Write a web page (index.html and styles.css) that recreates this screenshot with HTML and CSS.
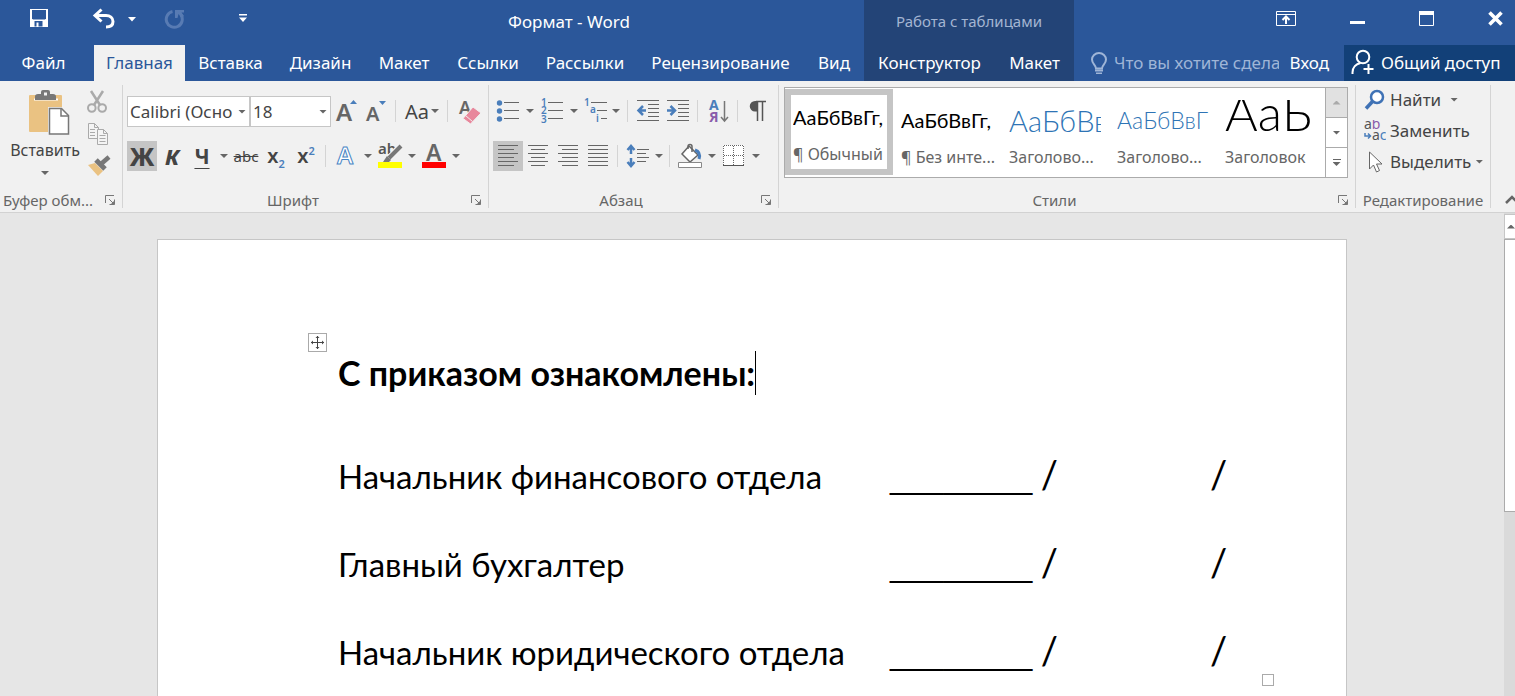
FILE: index.html
```html
<!DOCTYPE html>
<html lang="ru">
<head>
<meta charset="utf-8">
<title>Формат - Word</title>
<link rel="stylesheet" href="styles.css">
</head>
<body>
<header class="top">
  <div class="titlebar">
    <div class="quick">
      <button class="qbtn save" aria-label="Сохранить"><svg width="20" height="20" viewBox="0 0 20 20"><path d="M1 1h18v18H1z" fill="#fff"/><path d="M3 2h14v8.500l-1 1H4l-1-1z" fill="#2b579a"/><path d="M5.500 13h8v5.500h-8z" fill="#2b579a"/><path d="M7.500 14.500h2V19h-2z" fill="#fff"/></svg></button>
      <button class="qbtn undo" aria-label="Отменить"><svg width="24" height="22" viewBox="0 0 24 22"><path d="M9.500 1.500 3 7.500l6.500 6M3.500 7.500H14c4 0 7 2.200 7 6s-2.500 5.500-7 5.500" fill="none" stroke="#fff" stroke-width="3"/></svg></button>
      <button class="qbtn drop" aria-label="Список отмены"><svg width="8" height="5" viewBox="0 0 8 5"><path d="M0 0h8L4 4.500z" fill="#fff"/></svg></button>
      <button class="qbtn redo" aria-label="Повторить"><svg width="22" height="22" viewBox="0 0 22 22"><path d="M8.500 3.500a8 8 0 1 0 8.500 3.500" fill="none" stroke="#587bb3" stroke-width="3"/><path d="M11 2h9v2.500h-2.500L20 8l-2.500 2-3-4-1 4H11z" fill="#587bb3"/></svg></button>
      <button class="qbtn custom" aria-label="Настройка панели"><svg width="8" height="9" viewBox="0 0 8 9"><path d="M0 0h8v1.500H0zM0 3.500h8L4 8z" fill="#fff"/></svg></button>
    </div>
    <h1 class="doc-title">Формат - Word</h1>
    <div class="context-title">Работа с таблицами</div>
    <div class="window">
      <button aria-label="Параметры ленты"><svg width="20" height="15" viewBox="0 0 20 15"><path d="M.5.500h19v14H.500zM.5 3.500h19" fill="none" stroke="#fff"/><path d="M10 13V6M6.500 9 10 5.500 13.500 9" fill="none" stroke="#fff" stroke-width="2"/></svg></button>
      <button aria-label="Свернуть"><svg width="15" height="15" viewBox="0 0 15 15"><path d="M0 10h15v3H0z" fill="#fff"/></svg></button>
      <button aria-label="Развернуть"><svg width="15" height="15" viewBox="0 0 15 15"><path d="M.5.500h14v14H.500z" fill="none" stroke="#fff"/><path d="M0 0h15v4H0z" fill="#fff"/></svg></button>
      <button aria-label="Закрыть"><svg width="15" height="15" viewBox="0 0 15 15"><path d="M1.500 1.500l12 12M13.500 1.500l-12 12" stroke="#fff" stroke-width="3.600"/></svg></button>
    </div>
  </div>
  <div class="tabbar">
    <nav class="tabs">
      <button class="tab file">Файл</button><button class="tab active">Главная</button><button class="tab">Вставка</button><button class="tab">Дизайн</button><button class="tab">Макет</button><button class="tab">Ссылки</button><button class="tab">Рассылки</button><button class="tab">Рецензирование</button><button class="tab">Вид</button>
    </nav>
    <nav class="context-tabs"><button class="tab">Конструктор</button><button class="tab">Макет</button></nav>
    <div class="account">
      <label class="tell"><svg width="18" height="23" viewBox="0 0 18 23"><path d="M6 16.500c0-3.500-4-4.500-4-9a7 6.500 0 0 1 14 0c0 4.500-4 5.500-4 9z" fill="none" stroke="#9fb5d7" stroke-width="2"/><path d="M5 17.500h8v2H5zM6 20.500h6V22H6z" fill="#9fb5d7"/></svg><input type="text" placeholder="Что вы хотите сделать?" aria-label="Что вы хотите сделать?"></label>
      <a class="login" href="#">Вход</a>
      <button class="share"><svg width="24" height="26" viewBox="0 0 24 26"><circle cx="12" cy="8" r="6.300"/><path d="M1.500 25v-1.500c0-5 3.500-8.500 8-9.500M12.500 20h10M17.500 15v10"/></svg>Общий доступ</button>
    </div>
  </div>
</header>

<section class="ribbon" aria-label="Лента">
  <div class="group clipboard">
    <div class="body clip-body">
      <button class="paste">
        <svg width="42" height="46" viewBox="0 0 42 46"><path d="M2 5h31a1 1 0 0 1 1 1v36H2a1 1 0 0 1-1-1V6a1 1 0 0 1 1-1z" fill="#eac282"/><path d="M6 9.500h24" stroke="#fff" stroke-width="2"/><path d="M7 10V6.500Q7 4 10 4h3V2q0-2 2-2h5q2 0 2 2v2h3q3 0 3 2.500V10z" fill="#777"/><path d="M16 2.500h3v3h-3z" fill="#f1f1f1"/><path d="M20 17h15l7 7v22H20z" fill="#f1f1f1"/><path d="M21.500 18.500h12l7 7V44h-19z" fill="#fff" stroke="#777" stroke-width="1.500"/><path d="M33 18.500V26h7.500" fill="none" stroke="#777" stroke-width="1.500"/></svg>
        <span>Вставить</span>
        <i class="tri"></i>
      </button>
      <div class="clip-side">
        <button aria-label="Вырезать"><svg width="20" height="23" viewBox="0 0 20 23"><path d="M4 1l9 14M16 1L7 15" stroke="#aaa" stroke-width="2.500"/><circle cx="4.800" cy="18" r="3.800" fill="none" stroke="#aaa" stroke-width="2"/><circle cx="15.200" cy="18" r="3.800" fill="none" stroke="#aaa" stroke-width="2"/></svg></button>
        <button aria-label="Копировать"><svg width="22" height="22" viewBox="0 0 22 22"><g fill="#f4f4f4" stroke="#aaa"><path d="M1.500.500h6l4 4v11h-10zM7.500.500v4h4M3 6.500h5M3 9.500h5M3 12.500h5"/><path d="M10.500 6.500h6l4 4v11h-10zM16.500 6.500v4h4M12.500 12.500h6M12.500 15.500h6M12.500 18.500h6"/></g></svg></button>
        <button aria-label="Формат по образцу"><svg width="24" height="22" viewBox="0 0 24 22"><path d="M1 10l7-2 8 8-5 5z" fill="#eac282"/><path d="M9 5l9 9" stroke="#777" stroke-width="5"/><path d="M14 9l8-7" stroke="#777" stroke-width="4.500"/></svg></button>
      </div>
    </div>
    <footer><span>Буфер обм...</span><button class="launch" aria-label="Буфер обмена: параметры"><svg><use href="#launch"/></svg></button></footer>
  </div>

  <div class="group font">
    <div class="body rows">
      <div class="row">
        <span class="pick family"><select aria-label="Шрифт"><option>Calibri (Осно</option></select></span>
        <span class="pick size"><select aria-label="Размер шрифта"><option>18</option></select></span>
        <button class="ib" aria-label="Увеличить размер"><svg width="30" height="30"><text x="5" y="25" class="g" font-size="24">A</text><path d="M19 8h7l-3.500-4z" fill="#4a7ebb"/></svg></button>
        <button class="ib" aria-label="Уменьшить размер"><svg width="30" height="30"><text x="5" y="25" class="g" font-size="20">A</text><path d="M18 5h7l-3.500 4z" fill="#4a7ebb"/></svg></button>
        <i class="sep"></i>
        <button class="ib split case"><span>Aa</span><i class="tri"></i></button>
        <i class="sep"></i>
        <button class="ib" aria-label="Очистить формат"><svg width="30" height="30"><text x="6" y="18" class="g" font-size="18">A</text><path d="M10 22.500L20 11l8 6L17.500 28z" fill="#e8879c" stroke="#f1f1f1"/><path d="M12.500 19.500l7 6" stroke="#f1f1f1"/></svg></button>
      </div>
      <div class="row">
        <button class="ib on bold">Ж</button>
        <button class="ib ital">К</button>
        <button class="ib und">Ч</button><button class="arr" aria-label="Подчеркивание"><i class="tri"></i></button>
        <button class="ib strike">abc</button>
        <button class="ib idx"><span>x<sub>2</sub></span></button>
        <button class="ib idx"><span>x<sup>2</sup></span></button>
        <i class="sep"></i>
        <button class="ib" aria-label="Текстовые эффекты"><svg width="30" height="30"><text x="6" y="23" font-size="24" class="fx">A</text></svg></button><button class="arr" aria-label="Эффекты"><i class="tri"></i></button>
        <button class="ib" aria-label="Цвет выделения"><svg width="30" height="30"><text x="3" y="13" class="ab" font-size="15">ab</text><path d="M25 5l-11 12" stroke="#f1f1f1" stroke-width="6"/><path d="M26 5l-12 12" stroke="#777" stroke-width="4"/><path d="M12 15l4 4-2 2H8z" fill="#777"/><path d="M3 21h24v6H3z" fill="#ff0"/></svg></button><button class="arr" aria-label="Цвета выделения"><i class="tri"></i></button>
        <button class="ib" aria-label="Цвет текста"><svg width="30" height="30"><text x="7" y="20" class="g" font-size="23">A</text><path d="M3 21h24v6H3z" fill="#f00"/></svg></button><button class="arr" aria-label="Цвета текста"><i class="tri"></i></button>
      </div>
    </div>
    <footer><span>Шрифт</span><button class="launch" aria-label="Шрифт: параметры"><svg><use href="#launch"/></svg></button></footer>
  </div>

  <div class="group para">
    <div class="body rows">
      <div class="row">
        <button class="ib" aria-label="Маркеры"><svg width="30" height="30"><g fill="#4a7ebb"><circle cx="6.500" cy="7" r="2.700"/><circle cx="6.500" cy="15" r="2.700"/><circle cx="6.500" cy="23" r="2.700"/></g><path d="M11 6.500h15M11 14.500h15M11 22.500h15" class="ln"/></svg></button><button class="arr" aria-label="Виды маркеров"><i class="tri"></i></button>
        <button class="ib" aria-label="Нумерация"><svg width="30" height="30"><g class="num"><text x="4" y="10">1</text><text x="4" y="18">2</text><text x="4" y="27">3</text></g><path d="M11 6.500h15M11 14.500h15M11 22.500h15" class="ln"/></svg></button><button class="arr" aria-label="Виды нумерации"><i class="tri"></i></button>
        <button class="ib narrow" aria-label="Многоуровневый список"><svg width="28" height="30"><g class="num"><text x="3" y="10">1</text><text x="9" y="17">a</text><text x="15" y="26">i</text></g><path d="M10 6.500h16M16 14.500h10M20 22.500h6" class="ln"/></svg></button><button class="arr" aria-label="Виды списков"><i class="tri"></i></button>
        <i class="sep"></i>
        <button class="ib" aria-label="Уменьшить отступ"><svg width="30" height="30"><path d="M4 4.500h22M15 8.500h11M15 12.500h11M15 16.500h11M15 20.500h11M4 24.500h22" class="ln"/><path d="M13 14.500H6M10 10l-4.500 4.500L10 19" class="bl"/></svg></button>
        <button class="ib" aria-label="Увеличить отступ"><svg width="30" height="30"><path d="M4 4.500h22M15 8.500h11M15 12.500h11M15 16.500h11M15 20.500h11M4 24.500h22" class="ln"/><path d="M4 14.500h7M7.500 10l4.500 4.500L7.500 19" class="bl"/></svg></button>
        <i class="sep"></i>
        <button class="ib" aria-label="Сортировка"><svg width="30" height="30"><text x="6" y="14" font-size="14" font-weight="700" fill="#4a7ebb">А</text><text x="6" y="26" font-size="14" font-weight="700" fill="#8a5cab">Я</text><path d="M21.500 5v20M18 21l3.500 4 3.500-4" fill="none" stroke="#777" stroke-width="1.500"/></svg></button>
        <i class="sep"></i>
        <button class="ib" aria-label="Знаки абзаца"><svg width="30" height="30"><path d="M13 5.500h10M14.500 5v20M19.500 5v20" stroke="#555" stroke-width="1.500" fill="none"/><path d="M14 5h-2a5 5 0 0 0 0 10.500h2z" fill="#555"/></svg></button>
      </div>
      <div class="row">
        <button class="ib on" aria-label="По левому краю"><svg width="30" height="30"><path d="M5 4.500h20M5 8.500h16M5 12.500h20M5 16.500h16M5 20.500h20M5 24.500h16" class="ln"/></svg></button>
        <button class="ib" aria-label="По центру"><svg width="30" height="30"><path d="M5 4.500h20M8 8.500h14M5 12.500h20M8 16.500h14M5 20.500h20M8 24.500h14" class="ln"/></svg></button>
        <button class="ib" aria-label="По правому краю"><svg width="30" height="30"><path d="M5 4.500h20M9 8.500h16M5 12.500h20M9 16.500h16M5 20.500h20M9 24.500h16" class="ln"/></svg></button>
        <button class="ib" aria-label="По ширине"><svg width="30" height="30"><path d="M5 4.500h20M5 8.500h20M5 12.500h20M5 16.500h20M5 20.500h20M5 24.500h20" class="ln"/></svg></button>
        <i class="sep"></i>
        <button class="ib" aria-label="Интервал"><svg width="30" height="30"><path d="M8 13V6M4.500 9L8 5l3.500 4M8 17v8M4.500 21L8 25l3.500-4" class="bl"/><path d="M14 8.500h12M14 12.500h9M14 16.500h12M14 20.500h9" class="ln"/></svg></button><button class="arr slim" aria-label="Интервалы"><i class="tri"></i></button>
        <i class="sep"></i>
        <button class="ib" aria-label="Заливка"><svg width="30" height="30"><path d="M14 5l9 9-8 7-8-8z" fill="#fff" stroke="#666" stroke-width="1.500"/><path d="M13 8V5.500q0-2 2-2t2 2V11" fill="none" stroke="#666" stroke-width="1.500"/><path d="M20 9q6 2 4 9" fill="none" stroke="#4a7ebb" stroke-width="3"/><path d="M3.500 21.500h23v5h-23z" fill="#fff" stroke="#888"/></svg></button><button class="arr" aria-label="Цвета заливки"><i class="tri"></i></button>
        <button class="ib" aria-label="Границы"><svg width="30" height="30"><path d="M4 4h21v21H4z" fill="#fff"/><path d="M4.500 24V4.500h20V24M14.500 5v19M5 14.500h20" fill="none" stroke="#666" stroke-dasharray="1 1"/><path d="M4 24.500h21" stroke="#555"/></svg></button><button class="arr" aria-label="Виды границ"><i class="tri"></i></button>
      </div>
    </div>
    <footer><span>Абзац</span><button class="launch" aria-label="Абзац: параметры"><svg><use href="#launch"/></svg></button></footer>
  </div>

  <div class="group styles">
    <div class="body">
      <div class="gallery">
        <button class="style sel"><span class="prev">АаБбВвГг,</span><span class="name">¶ Обычный</span></button>
        <button class="style"><span class="prev">АаБбВвГг,</span><span class="name">¶ Без инте...</span></button>
        <button class="style"><span class="prev h1">АаБбВв</span><span class="name">Заголово...</span></button>
        <button class="style"><span class="prev h2">АаБбВвГ</span><span class="name">Заголово...</span></button>
        <button class="style"><span class="prev big">АаБ</span><span class="name">Заголовок</span></button>
        <div class="gscroll">
          <button class="off" aria-label="Вверх"><i class="tri up"></i></button>
          <button aria-label="Вниз"><i class="tri"></i></button>
          <button class="more" aria-label="Ещё"><i class="tri"></i></button>
        </div>
      </div>
    </div>
    <footer><span>Стили</span><button class="launch" aria-label="Стили: параметры"><svg><use href="#launch"/></svg></button></footer>
  </div>

  <div class="group edit">
    <div class="body edit-body">
      <button><svg width="22" height="22" viewBox="0 0 22 22"><circle cx="13" cy="8" r="6" fill="#fff" stroke="#3f72b5" stroke-width="2.500"/><path d="M8.500 12.500L2 19.500" stroke="#3f72b5" stroke-width="3.500"/></svg><span>Найти</span><i class="tri far"></i></button>
      <button><svg width="22" height="22" viewBox="0 0 22 22"><text x="0" y="9" class="ab" font-size="14">a<tspan fill="#8a5cab">b</tspan></text><text x="8" y="20" class="ab" font-size="14">a<tspan fill="#4a7ebb">c</tspan></text><path d="M1 13v3h5M4 13.500l2.500 2.500L4 18.500" fill="none" stroke="#4a7ebb" stroke-width="1.500"/></svg><span>Заменить</span></button>
      <button><svg width="22" height="22" viewBox="0 0 22 22"><path d="M5.500 1v17l4-4 3 7 3-1.500-3-6.500h5.500z" fill="#fff" stroke="#666"/></svg><span>Выделить</span><i class="tri"></i></button>
    </div>
    <footer><span>Редактирование</span></footer>
  </div>
  <button class="collapse" aria-label="Свернуть ленту"><svg width="14" height="9" viewBox="0 0 14 9"><path d="M1 8l6-6 6 6" fill="none" stroke="#666" stroke-width="2.500"/></svg></button>
</section>

<main class="work">
  <article class="page">
    <span class="handle"><svg width="13" height="13" viewBox="0 0 13 13"><path d="M6.500 0v13M0 6.500h13" stroke="#444"/><path d="M6.500 0l2 2h-4zM6.500 13l2-2h-4zM0 6.500l2-2v4zM13 6.500l-2-2v4z" fill="#444"/></svg></span>
    <table class="sheet">
      <tr class="head"><th colspan="3"><span class="caret">С приказом ознакомлены:</span></th></tr>
      <tr><td>Начальник финансового отдела</td><td><span class="blank">________</span> <span class="slash">/</span></td><td><span class="slash">/</span></td></tr>
      <tr><td>Главный бухгалтер</td><td><span class="blank">________</span> <span class="slash">/</span></td><td><span class="slash">/</span></td></tr>
      <tr><td>Начальник юридического отдела</td><td><span class="blank">________</span> <span class="slash">/</span></td><td><span class="slash">/</span></td></tr>
    </table>
    <span class="corner"></span>
  </article>
  <div class="vscroll"><button aria-label="Прокрутить вверх"><i class="tri up"></i></button><div class="thumb"></div></div>
</main>

<svg class="defs" width="0" height="0"><symbol id="launch" viewBox="0 0 10 10"><path d="M.5 8V.500H9M4 4l4 4M9.500 4.500v5h-5" fill="none" stroke="#777"/><path d="M9.500 5.500v4h-4z" fill="#777"/></symbol></svg>
</body>
</html>
```
FILE: styles.css
```css
* { box-sizing: border-box; }
body {
  margin: 0;
  height: 100vh;
  display: flex;
  flex-direction: column;
  overflow: hidden;
  background: #e6e6e6;
  color: #444;
  font-family: "Noto Sans", "Open Sans", sans-serif;
  font-size: 17px;
}
button, input, select { font: inherit; color: inherit; }
button { border: 0; padding: 0; background: none; }
svg { display: block; flex: none; }
.defs { position: absolute; }

/* title bar and tabs */
.top { background: #2b579a; color: #fff; flex: none; }
.titlebar { display: flex; height: 45px; }
.quick { display: flex; flex: none; width: 274px; padding-left: 29px; align-items: flex-start; }
.qbtn { display: block; }
.save { padding-top: 8px; margin-right: 43px; }
.undo { padding-top: 8px; margin-right: 12px; }
.drop { padding-top: 17px; margin-right: 28px; }
.redo { padding-top: 8px; margin-right: 53px; }
.custom { padding-top: 14px; }
.doc-title { flex: 0 0 590px; margin: 0; font-size: 17px; font-weight: 400; line-height: 44px; text-align: center; }
.context-title { flex: 0 0 210px; background: #234477; color: #a3b5d2; font-size: 15px; line-height: 43px; text-align: center; }
.window { display: flex; flex: 1; justify-content: flex-end; align-items: flex-start; gap: 54px; padding: 11px 12px 0 0; }
.tabbar { display: flex; height: 36px; }
.tabs { display: grid; flex: none; grid-template-columns: 94px 91px 91px 89px 78px 90px 104px 167px 60px; }
.context-tabs { display: grid; flex: none; grid-template-columns: 131px 79px; background: #234477; }
.tab { padding-bottom: 2px; white-space: nowrap; }
.file { padding-right: 7px; }
.active { background: #f1f1f1; color: #2b579a; }
.account { display: flex; flex: 1; min-width: 0; align-items: center; }
.tell { display: flex; flex: 1; min-width: 0; align-items: center; gap: 6px; padding-left: 16px; }
.tell input { flex: 1; min-width: 0; padding: 0 0 2px; border: 0; background: none; outline: 0; }
.tell input::placeholder { color: #9fb5d7; opacity: 1; }
.login { margin: 0 15px 0 11px; padding-bottom: 2px; color: #fff; text-decoration: none; }
.share { display: flex; flex: 0 0 171px; align-self: stretch; align-items: center; gap: 6px; padding: 0 0 2px 7px; background: #124078; white-space: nowrap; }
.share svg { fill: none; stroke: #fff; stroke-width: 2; }

/* ribbon */
.ribbon { display: flex; flex: none; height: 132px; padding: 4px 0; background: #f1f1f1; border-bottom: 1px solid #d2d2d2; }
.group { display: flex; flex: none; flex-direction: column; border-right: 1px solid #d4d4d4; }
.body { flex: 1; }
.group footer { display: flex; align-items: center; height: 16px; padding-right: 7px; color: #666; font-size: 15px; line-height: 16px; }
.group footer span { flex: 1; padding-right: 8px; text-align: center; white-space: nowrap; }
.group.clipboard footer span { padding: 0 0 0 3px; text-align: left; }
.launch svg { width: 10px; height: 10px; }
.clipboard { width: 123px; }
.font { width: 366px; }
.para { width: 290px; }
.group.styles { flex: 1; min-width: 0; }
.edit { width: 135px; }
.group.edit footer { padding: 0; }
.group.edit footer span { padding: 0; }
.tri { display: block; flex: none; width: 8px; height: 4px; background: #666; clip-path: polygon(0 0, 100% 0, 50% 100%); }
.tri.up { clip-path: polygon(50% 0, 100% 100%, 0 100%); }

.clip-body { display: flex; padding-top: 5px; }
.paste { display: flex; flex-direction: column; align-items: center; align-self: flex-start; width: 87px; padding-left: 3px; font-size: 16px; line-height: 28px; }
.paste .tri { margin-top: 7px; }
.paste svg { margin-left: 7px; }
.clip-side { display: flex; flex-direction: column; gap: 10px; }

.rows { display: flex; flex-direction: column; gap: 15px; padding: 11px 0 0 4px; }
.row { display: flex; height: 30px; align-items: center; }
.ib { display: flex; flex: none; width: 30px; height: 30px; align-items: center; justify-content: center; font-weight: 600; }
.narrow { width: 28px; }
.on { background: #c5c5c5; }
.arr { display: flex; flex: none; width: 14px; height: 30px; align-items: center; justify-content: center; }
.slim { width: 12px; }
.sep { flex: none; width: 1px; height: 22px; margin: 0 5px 0 4px; background: #d4d4d4; }
.pick { position: relative; display: block; height: 31px; }
.pick::after { content: ""; position: absolute; right: 4px; top: 14px; width: 8px; height: 4px; background: #666; clip-path: polygon(0 0, 100% 0, 50% 100%); pointer-events: none; }
.pick select { width: 100%; height: 31px; padding: 1px 2px 0; border: 1px solid #c6c6c6; background: #fff; appearance: none; outline: 0; }
.family { width: 123px; }
.size { width: 81px; }
.case { width: 42px; font-size: 20px; font-weight: 400; gap: 2px; }
.bold { font-size: 24px; font-weight: 800; }
.ital { font-size: 22px; font-weight: 800; font-style: italic; }
.und { font-size: 21px; font-weight: 700; text-decoration: underline; text-decoration-thickness: 1px; text-underline-offset: 4px; }
.strike { font-size: 15px; font-weight: 400; text-decoration: line-through; }
.idx { font-size: 20px; line-height: 30px; }
.idx sub, .idx sup { color: #4a7ebb; font-size: 11px; line-height: 0; }
.g { fill: #666; font-weight: 600; }
.ab { fill: #555; }
.fx { fill: #fff; stroke: #4a86c5; stroke-width: 1px; font-weight: 600; }
.num text { fill: #4a7ebb; font-size: 10px; font-weight: 600; }
.ln { fill: none; stroke: #666; }
.bl { fill: none; stroke: #4a7ebb; stroke-width: 2.5px; }

.gallery { display: flex; height: 91px; margin: 2px 7px 0 5px; border: 1px solid #ababab; background: #fff; overflow: hidden; }
.style { display: block; flex: 0 0 108px; height: 86px; margin-top: 1px; padding: 8px 8px 0; overflow: hidden; text-align: left; }
.sel { border: 6px solid #c5c5c5; padding: 2px 2px 0; }
.prev { display: block; height: 41px; overflow: hidden; color: #000; font-family: Lato, "Open Sans", sans-serif; font-size: 20px; line-height: 41px; white-space: nowrap; }
.h1 { color: #2e74b5; font-size: 29px; font-weight: 300; }
.h2 { color: #2e74b5; font-size: 23px; font-weight: 300; }
.big { font-size: 50px; font-weight: 300; line-height: 24px; }
.name { display: block; color: #666; font-size: 16px; line-height: 32px; white-space: nowrap; }
.gscroll { display: flex; flex: 1; flex-direction: column; border-left: 1px solid #ababab; }
.gscroll button { display: flex; flex: 1; align-items: center; justify-content: center; border-bottom: 1px solid #ababab; }
.gscroll .more { flex-direction: column; gap: 2px; border: 0; }
.more::before { content: ""; width: 8px; height: 1px; background: #666; }
.gscroll .off { background: #e1e1e1; }
.off .tri { background: #aaa; }

.edit-body { padding-left: 8px; }
.edit-body button { display: flex; align-items: center; gap: 4px; height: 31px; padding-bottom: 2px; }
.edit-body .far { margin-left: 5px; }
.collapse { align-self: flex-end; width: 24px; padding: 0 0 4px 14px; overflow: hidden; }

/* document */
.work { display: flex; flex: 1; min-height: 0; justify-content: space-between; }
.page { position: relative; flex: 0 1 1190px; margin: 26px 0 0 157px; padding: 82px 0 0 180px; border: 1px solid #c6c6c6; border-bottom: 0; background: #fff; }
.handle { position: absolute; left: 150px; top: 93px; display: grid; place-items: center; width: 19px; height: 19px; border: 1px solid #aaa; }
.corner { position: absolute; left: 1104px; top: 434px; width: 12px; height: 12px; border: 1px solid #aaa; }
.sheet { border-collapse: collapse; color: #000; font-family: Lato, "Open Sans", sans-serif; font-size: 33px; line-height: 44px; }
.sheet th, .sheet td { height: 88px; padding: 0; text-align: left; white-space: nowrap; vertical-align: middle; }
.sheet .head th { height: 110px; padding-bottom: 8px; font-size: 34px; }
.sheet td:first-child { width: 552px; }
.sheet td:nth-child(2) { width: 320px; }
.blank { font-family: "Liberation Sans", sans-serif; font-size: 32px; line-height: 32px; }
.slash { font-size: 38px; line-height: 32px; }
.caret { display: inline-block; border-right: 1px solid #000; }
.vscroll { flex: none; width: 11px; padding-top: 1px; background: #dadada; }
.vscroll button { display: flex; width: 11px; height: 25px; align-items: center; justify-content: flex-end; border: 1px solid #c6c6c6; border-right: 0; background: #fff; }
.thumb { height: 273px; border: 1px solid #ababab; border-right: 0; background: #fff; }
```
